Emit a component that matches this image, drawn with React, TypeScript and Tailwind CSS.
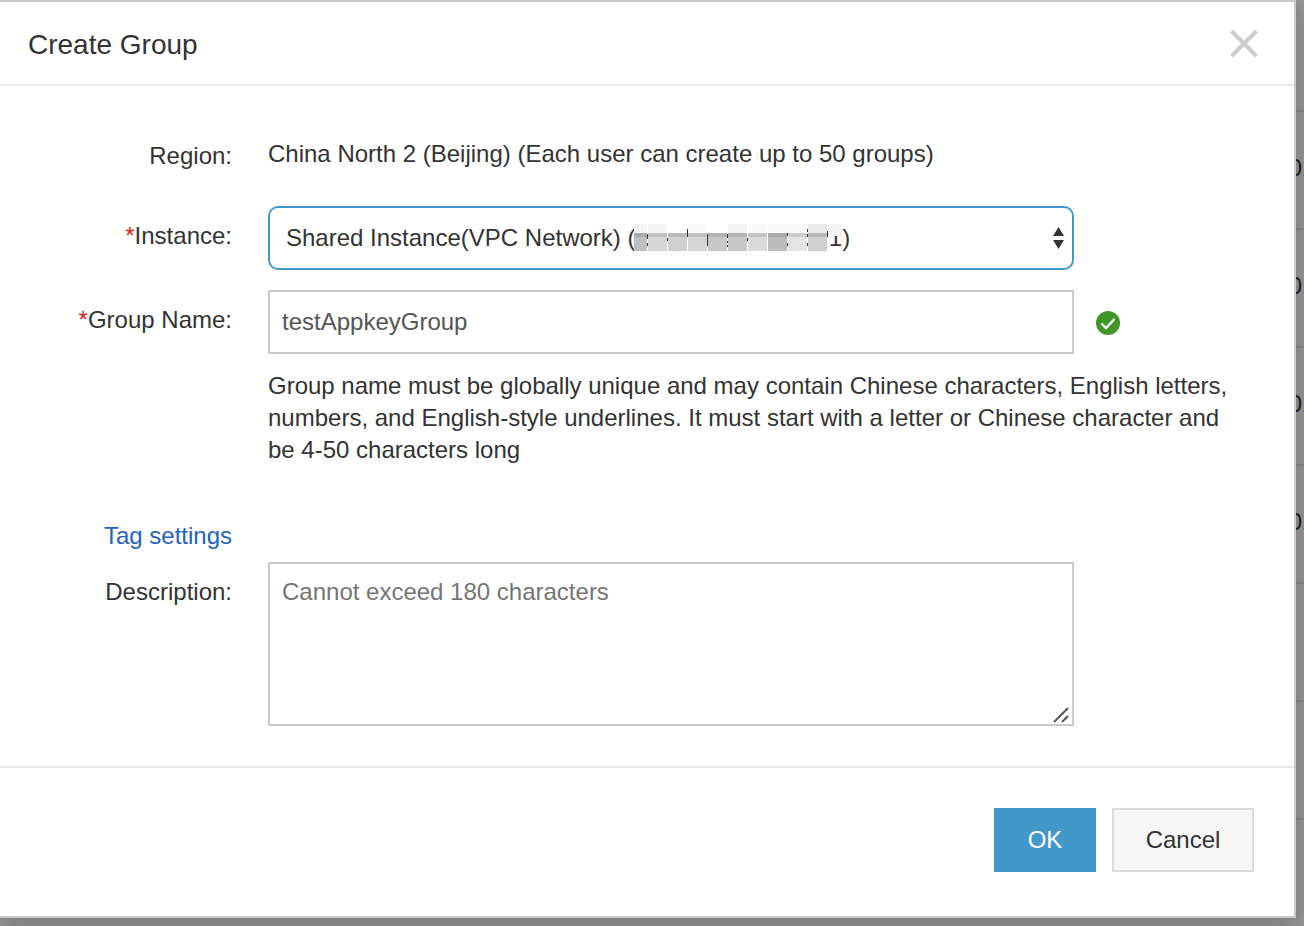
import clsx from 'clsx';
import { ReactNode, useState } from 'react';

const ROWS = ['', '01', '01', '01', '01', '', ''];

// tones of the redaction mosaic, left to right
const MOSAIC = [
    { width: 'w-[14px]', top: 'bg-[#f5f5f5]', bottom: 'bg-[#bfbfbf]' },
    { width: 'w-5', top: 'bg-[#f5f5f5]', bottom: 'bg-[#d6d6d6]' },
    { width: 'w-5', top: 'bg-white', bottom: 'bg-[#cfcfcf]' },
    { width: 'w-5', top: 'bg-[#fafafa]', bottom: 'bg-[#d6d6d6]' },
    { width: 'w-5', top: 'bg-white', bottom: 'bg-[#c8c8c8]' },
    { width: 'w-5', top: 'bg-[#f3f3f3]', bottom: 'bg-[#c8c8c8]' },
    { width: 'w-5', top: 'bg-[#fafafa]', bottom: 'bg-[#dadada]' },
    { width: 'w-5', top: 'bg-[#fafafa]', bottom: 'bg-[#bcbcbc]' },
    { width: 'w-5', top: 'bg-[#fafafa]', bottom: 'bg-[#e4e4e4]' },
    { width: 'w-5', top: 'bg-[#e9e9e9]', bottom: 'bg-[#cfcfcf]' },
];

const HIDDEN_ID = '\u00a0'.repeat(29);

const FormRow = ({
    label,
    htmlFor,
    required,
    className,
    children,
}: {
    label: string;
    htmlFor?: string;
    required?: boolean;
    className?: string;
    children: ReactNode;
}) => (
    <div className={clsx('flex gap-9', className)}>
        <label htmlFor={htmlFor} className="w-[232px] shrink-0 pt-[14px] text-right">
            {required && <span className="text-[#e02020]">*</span>}
            {label}
        </label>
        <div className="min-w-0 flex-1">{children}</div>
    </div>
);

const Field = ({ children, status }: { children: ReactNode; status?: ReactNode }) => (
    <div className="flex items-center">
        <div className="relative min-w-0 flex-1">{children}</div>
        <div className="w-[164px] shrink-0 pl-[22px]">{status}</div>
    </div>
);

const Mosaic = () => (
    <div className="pointer-events-none absolute top-[18px] left-[366px] flex">
        {MOSAIC.map((item, index) => (
            <div key={index} className={clsx('border-r border-white', item.width)}>
                <div className={clsx('h-[9px]', item.top)} />
                <div className={clsx('h-[18px] border-t-4 border-black/10', item.bottom)} />
            </div>
        ))}
        <div className="h-3 w-[14px] bg-[#f3f3f3]" />
        <svg className="absolute top-0 left-0 h-[27px] w-[212px]" viewBox="6 0 212 27" stroke="#333" strokeWidth="1">
            <path d="M19.5 10v5M19.5 19v3M39.5 14v3M59.5 5v8M79.5 10v12M99.5 10v4M99.5 17v2M99.5 21v2M119.5 14v3M159.5 9v3M159.5 19v3M179.5 5v3M179.5 10v3M179.5 19v3M199.5 7v6" />
        </svg>
    </div>
);

export default function App() {
    const [groupName, setGroupName] = useState('testAppkeyGroup');
    const [description, setDescription] = useState('');

    return (
        <div className="flex min-h-screen items-start overflow-hidden bg-[#999] font-['Liberation_Sans',Arial,sans-serif] text-2xl leading-8 text-[#333]">
            <div
                role="dialog"
                aria-labelledby="dialog-title"
                className="relative z-10 min-w-0 flex-1 border-t-2 border-r-2 border-b-2 border-[#c9c9c9] bg-white shadow-[0_6px_24px_4px_rgba(0,0,0,0.2)]"
            >
                <header className="flex h-[84px] items-center justify-between border-b-2 border-[#e9e9e9] pr-9 pl-7">
                    <h1 id="dialog-title" className="pt-1 text-[28px]">
                        Create Group
                    </h1>
                    <button type="button" aria-label="Close" className="cursor-pointer text-[#ccc]">
                        <svg className="h-7 w-7" viewBox="0 0 28 28" fill="none" stroke="currentColor" strokeWidth="4">
                            <path d="M1.500 2l25 25M26.500 2l-25 25" />
                        </svg>
                    </button>
                </header>

                <main className="pt-10 pr-14 pb-10">
                    <FormRow label="Region:" className="mb-5 h-15">
                        <p className="pt-3">China North 2 (Beijing) (Each user can create up to 50 groups)</p>
                    </FormRow>

                    <FormRow label="Instance:" htmlFor="instance" required className="mb-5">
                        <Field>
                            <select
                                id="instance"
                                className="block h-16 w-full appearance-none rounded-[10px] border-2 border-[#4298c8] bg-white px-4 outline-none"
                            >
                                <option>{`Shared Instance(VPC Network) (${HIDDEN_ID}1)`}</option>
                            </select>
                            <Mosaic />
                            <svg
                                className="pointer-events-none absolute top-[21px] right-[10px] h-[22px] w-[11px]"
                                viewBox="0 0 11 22"
                                fill="#333"
                            >
                                <path d="M5.500 0L11 9H0zM0 13h11l-5.500 9z" />
                            </svg>
                        </Field>
                    </FormRow>

                    <FormRow label="Group Name:" htmlFor="group-name" required className="mb-10">
                        <Field
                            status={
                                <svg className="mt-0.5 h-6 w-6" viewBox="0 0 24 24" fill="none">
                                    <circle cx="12" cy="12" r="12" fill="#3f9727" />
                                    <path d="M5.500 12.500l4.500 4.500 8.500-9" stroke="#fff" strokeWidth="2.400" />
                                </svg>
                            }
                        >
                            <input
                                id="group-name"
                                type="text"
                                value={groupName}
                                onChange={(e) => setGroupName(e.target.value)}
                                className="block h-16 w-full border-2 border-[#c9c9c9] bg-white px-3 text-[#555] outline-none"
                            />
                        </Field>
                        <p className="mt-4">
                            Group name must be globally unique and may contain Chinese characters, English letters,
                            numbers, and English-style underlines. It must start with a letter or Chinese character and
                            be 4-50 characters long
                        </p>
                    </FormRow>

                    <div className="h-14 w-[232px] pt-[14px] text-right">
                        <a href="#tags" className="text-[#1f63bd]">
                            Tag settings
                        </a>
                    </div>

                    <FormRow label="Description:" htmlFor="description">
                        <Field>
                            <textarea
                                id="description"
                                value={description}
                                onChange={(e) => setDescription(e.target.value)}
                                placeholder="Cannot exceed 180 characters"
                                className="block h-[164px] w-full resize-none border-2 border-[#c9c9c9] bg-white px-3 py-3 text-[#555] outline-none placeholder:text-[#757575]"
                            />
                            <svg
                                className="pointer-events-none absolute right-[5px] bottom-[3px] h-4 w-4"
                                viewBox="0 0 16 16"
                                stroke="#555"
                                strokeWidth="2"
                            >
                                <path d="M1 15L15 1M9 15l6-6" />
                            </svg>
                        </Field>
                    </FormRow>
                </main>

                <footer className="flex justify-end gap-4 border-t-2 border-[#e9e9e9] pt-10 pr-10 pb-11">
                    <button type="button" className="h-16 w-[102px] cursor-pointer bg-[#4298c8] text-white">
                        OK
                    </button>
                    <button
                        type="button"
                        className="h-16 w-[142px] cursor-pointer border-2 border-[#dcdcdc] bg-[#f7f7f7]"
                    >
                        Cancel
                    </button>
                </footer>
            </div>

            {/* edge of the dimmed table behind the dialog */}
            <div className="-mt-1.5 w-2 shrink-0" aria-hidden="true">
                {ROWS.map((text, index) => (
                    <div
                        key={index}
                        className="flex h-[118px] items-center justify-center overflow-hidden border-b-2 border-[#88888c] pb-1 pl-1 text-[#222]"
                    >
                        <span className="shrink-0">{text}</span>
                    </div>
                ))}
            </div>
        </div>
    );
}
